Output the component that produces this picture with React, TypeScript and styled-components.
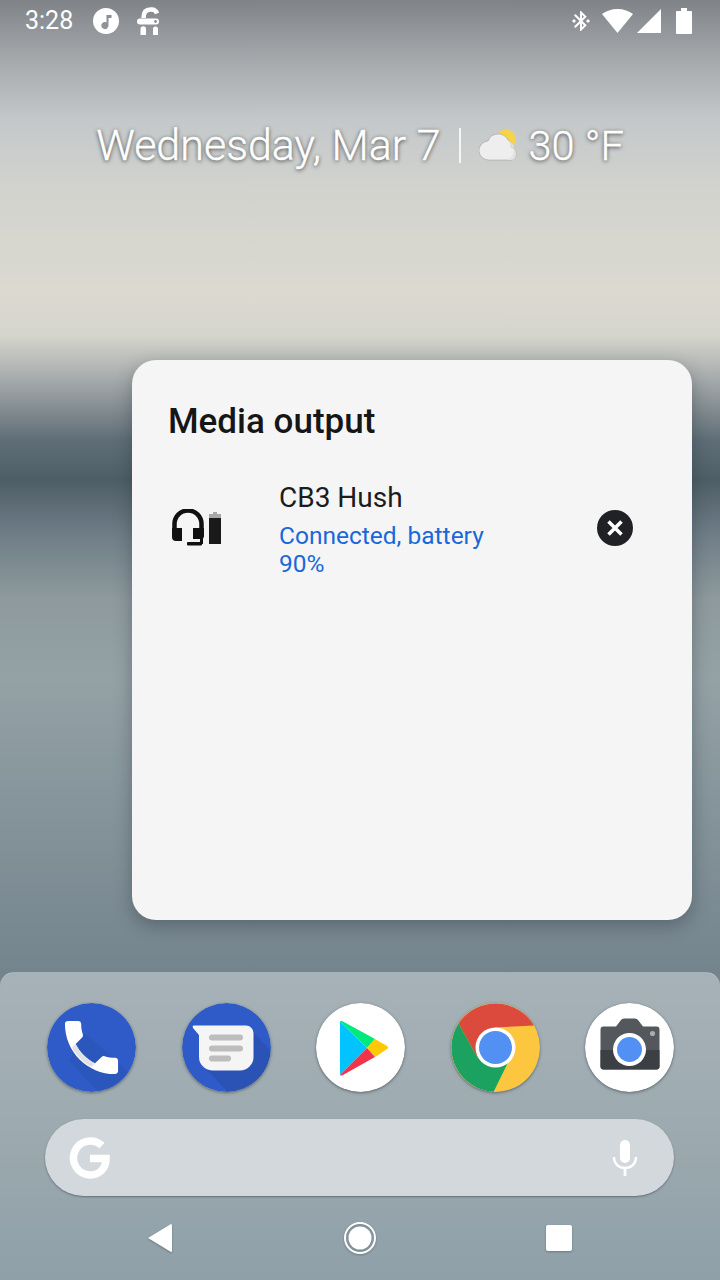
import React from "react";
import styled, { createGlobalStyle } from "styled-components";

const GlobalStyle = createGlobalStyle`
  html, body {
    margin: 0;
    padding: 0;
    width: 720px;
    height: 1280px;
    overflow: hidden;
    font-family: Roboto, "Liberation Sans", sans-serif;
  }
`;

const Screen = styled.div`
  width: 720px;
  height: 1280px;
  display: flex;
  flex-direction: column;
  background: linear-gradient(
    180deg,
    #7f8287 0px,
    #a6a9ac 60px,
    #c4c8ca 120px,
    #d2d3ce 190px,
    #dbd9d0 290px,
    #d6d5cd 335px,
    #9fa5a6 385px,
    #5f6e76 440px,
    #4e5e67 480px,
    #72808a 540px,
    #8e9a9d 600px,
    #94a2a6 680px,
    #86959b 800px,
    #76868f 960px,
    #6f7f88 1000px
  );
`;

const StatusBar = styled.div`
  height: 42px;
  display: flex;
  align-items: center;
  justify-content: space-between;
  padding: 0 28px 0 25px;
  flex-shrink: 0;
`;

const StatusGroup = styled.div`
  display: flex;
  align-items: center;
`;

const Clock = styled.span`
  font-size: 25px;
  color: #fff;
  line-height: 42px;
  width: 68px;
`;

const IconGap = styled.span<{ $left: number }>`
  display: flex;
  margin-left: ${(p) => p.$left}px;
`;

const Glance = styled.div`
  margin-top: 79px;
  height: 48px;
  display: flex;
  align-items: center;
  justify-content: center;
  flex-shrink: 0;
`;

const GlanceText = styled.span<{ $size: number }>`
  font-family: Roboto, sans-serif;
  font-weight: 300;
  font-size: ${(p) => p.$size}px;
  color: #fff;
  white-space: nowrap;
  -webkit-text-stroke: 0.4px #fff;
  text-shadow: 0 1px 4px rgba(0, 0, 0, 0.75);
`;

const GlanceDivider = styled.div`
  width: 2px;
  height: 35px;
  background: rgba(255, 255, 255, 0.8);
  margin: 0 18px;
`;

const CloudWrap = styled.div`
  display: flex;
  margin-right: 8px;
`;

const Card = styled.section`
  width: 560px;
  height: 560px;
  margin: 191px 28px 0 auto;
  flex-shrink: 0;
  box-sizing: border-box;
  padding: 42px 36px 0;
  background: #f5f5f5;
  border-radius: 24px;
  box-shadow: 0 6px 18px rgba(30, 40, 50, 0.35);
`;

const CardTitle = styled.h2`
  margin: 0;
  font-size: 35px;
  line-height: 40px;
  font-weight: 500;
  color: #161616;
`;

const DeviceRow = styled.div`
  display: flex;
  align-items: flex-start;
  margin-top: 38px;
`;

const DeviceIconSlot = styled.div`
  width: 112px;
  padding: 29px 0 0 4px;
  box-sizing: border-box;
  flex-shrink: 0;
  display: flex;
`;

const DeviceText = styled.div`
  width: 240px;
  flex-shrink: 0;
  margin-left: -1px;
`;

const DeviceName = styled.div`
  font-size: 28px;
  line-height: 36px;
  color: #1c1c1c;
`;

const DeviceStatus = styled.div`
  margin-top: 6px;
  font-size: 24.5px;
  line-height: 28px;
  color: #1a68d8;
`;

const CloseSlot = styled.div`
  margin: 30px 0 0 78px;
  display: flex;
`;

const Dock = styled.footer`
  margin-top: auto;
  height: 308px;
  flex-shrink: 0;
  box-sizing: border-box;
  padding-top: 30px;
  border-radius: 14px 14px 0 0;
  border-top: 1px solid rgba(255, 255, 255, 0.18);
  background: linear-gradient(180deg, #a6b2b7 0%, #9daaaf 50%, #8fa0a9 100%);
  display: flex;
  flex-direction: column;
`;

const AppRow = styled.div`
  width: 627px;
  margin-left: 47px;
  display: flex;
  justify-content: space-between;
`;

const AppIcon = styled.svg`
  width: 89px;
  height: 89px;
  display: block;
  border-radius: 50%;
  box-shadow: 0 1px 3px rgba(40, 50, 60, 0.55);
`;

const SearchBar = styled.div`
  width: 629px;
  height: 77px;
  margin: 27px 0 0 45px;
  box-sizing: border-box;
  padding: 0 36px 0 23px;
  border-radius: 39px;
  background: #d3d8dc;
  box-shadow: 0 1px 2px rgba(60, 75, 85, 0.6);
  display: flex;
  align-items: center;
  justify-content: space-between;
`;

const NavBar = styled.nav`
  width: 428px;
  margin: 24px 0 0 146px;
  display: flex;
  align-items: center;
  justify-content: space-between;
`;

const NavIcon = styled.svg<{ $width: number }>`
  display: block;
  width: ${(p) => p.$width}px;
  height: 36px;
  filter: drop-shadow(0 1px 1px rgba(50, 60, 70, 0.4));
`;

const Icon = styled.svg`
  display: block;
  flex-shrink: 0;
`;

const MusicIcon = () => (
  <Icon width="26" height="26" viewBox="0 0 26 26">
    <path
      fillRule="evenodd"
      fill="#fff"
      d="M13 0a13 13 0 1 0 0 26a13 13 0 0 0 0-26zM13.500 7h5v3h-3v7.500a3.600 3.600 0 1 1-2-3.200z"
    />
  </Icon>
);

const FiIcon = () => (
  <Icon width="24" height="28" viewBox="0 0 24 28">
    <path
      d="M7.500 11C7.500 5 10.500 2.500 14.500 2.500H15.500C18 2.500 20 3.500 21 6.500"
      fill="none"
      stroke="#fff"
      strokeWidth="4.500"
    />
    <rect x="1" y="11.500" width="22" height="6" rx="3" fill="#fff" />
    <circle cx="19.500" cy="14.500" r="1.400" fill="#8d9094" />
    <path d="M4.500 22a2.500 2.500 0 0 1 5.500 0V28H4.500zM17 22a2.500 2.500 0 0 1 5 0V28h-5z" fill="#fff" />
  </Icon>
);

const BluetoothIcon = () => (
  <Icon width="24" height="24" viewBox="0 0 24 24">
    <path
      fill="#fff"
      d="M7 12l-2-2-2 2 2 2 2-2zm10.710-4.290L12 2h-1v7.590L6.410 5 5 6.410 10.590 12 5 17.590 6.410 19 11 14.410V22h1l5.710-5.710-4.300-4.290 4.300-4.290zM13 5.830l1.880 1.880L13 9.590V5.830zm1.880 10.460L13 18.170v-3.760l1.880 1.880zM19 10l-2 2 2 2 2-2-2-2z"
    />
  </Icon>
);

const WifiIcon = () => (
  <Icon width="31" height="24" viewBox="0 0 31 24">
    <path fill="#fff" d="M15.500 24L0 5C4 2 9.500 0 15.500 0S27 2 31 5z" />
  </Icon>
);

const SignalIcon = () => (
  <Icon width="24" height="24" viewBox="0 0 24 24">
    <path fill="#fff" d="M0 24L24 0v24z" />
  </Icon>
);

const BatteryIcon = () => (
  <Icon width="16" height="26" viewBox="0 0 16 26">
    <path fill="#fff" d="M5 0h6v3h4a1 1 0 0 1 1 1v21a1 1 0 0 1-1 1H1a1 1 0 0 1-1-1V4a1 1 0 0 1 1-1h4z" />
  </Icon>
);

const CloudIcon = () => (
  <Icon width="42" height="34" viewBox="0 0 42 34">
    <circle cx="27" cy="11" r="9.500" fill="#f7d447" />
    <path
      d="M10 32a9.500 9.500 0 0 1-1-19 11 11 0 0 1 20-1 6 6 0 0 1 3 7 7 7 0 0 1 1 13z"
      fill="#eeeeee"
      stroke="rgba(120,120,120,0.35)"
      strokeWidth="1"
    />
    <path d="M29 12a11 11 0 0 1-1 20h5a7 7 0 0 0-1-13 6 6 0 0 0-3-7z" fill="#e2e2e2" />
  </Icon>
);

const HeadsetBattery = () => (
  <Icon width="50" height="38" viewBox="0 0 50 38">
    <path d="M2.500 22V15a13.500 13.500 0 0 1 27 0v7" fill="none" stroke="#111" strokeWidth="4.500" />
    <path d="M0 19h10v13H4a4 4 0 0 1-4-4zM21 19h11v8a3 3 0 0 1-3 3h-8z" fill="#111" />
    <rect x="15" y="33" width="15" height="3.500" rx="1" fill="#111" />
    <rect x="28" y="29" width="3" height="6" fill="#111" />
    <path d="M41 3h4v2h4v4H37V5h4z" fill="#a8a8a8" />
    <rect x="37" y="9" width="12" height="26" fill="#1a1a1a" />
  </Icon>
);

const CloseIcon = () => (
  <Icon width="36" height="36" viewBox="0 0 36 36">
    <circle cx="18" cy="18" r="18" fill="#202124" />
    <path d="M11.500 11.500l13 13M24.500 11.500l-13 13" stroke="#fff" strokeWidth="3.600" />
  </Icon>
);

const PhoneApp = () => (
  <AppIcon viewBox="0 0 89 89">
    <defs>
      <clipPath id="phoneClip">
        <circle cx="44.500" cy="44.500" r="44.500" />
      </clipPath>
    </defs>
    <circle cx="44.500" cy="44.500" r="44.500" fill="#2f5bc8" />
    <path d="M38 30L89 76V89H52L22 58z" fill="#2850ad" opacity="0.45" clipPath="url(#phoneClip)" />
    <g transform="translate(44.500 44.500) scale(2.950) translate(-12 -12)">
      <path
        fill="#fff"
        d="M6.620 10.790c1.440 2.830 3.760 5.140 6.590 6.590l2.200-2.200c.27-.27.67-.36 1.020-.24 1.120.37 2.330.57 3.570.57.55 0 1 .45 1 1V20c0 .55-.45 1-1 1-9.390 0-17-7.610-17-17 0-.55.45-1 1-1h3.500c.55 0 1 .45 1 1 0 1.250.2 2.450.57 3.570.11.35.03.74-.25 1.020l-2.200 2.200z"
      />
    </g>
    <path d="M28.600 41C32.800 49.500 39.600 56.200 48 60.400L44.500 64C36 59.500 29 52.500 25 44.500z" fill="#e2e2e2" />
  </AppIcon>
);

const MessagesApp = () => (
  <AppIcon viewBox="0 0 89 89">
    <defs>
      <clipPath id="messagesClip">
        <circle cx="44.500" cy="44.500" r="44.500" />
      </clipPath>
    </defs>
    <circle cx="44.500" cy="44.500" r="44.500" fill="#2f5bc8" />
    <path d="M70 28L89 48V89H46L22 64z" fill="#2850ad" opacity="0.7" clipPath="url(#messagesClip)" />
    <path
      d="M12 22.500H64a7.500 7.500 0 0 1 7.500 7.500V54a13.500 13.500 0 0 1-13.500 13.500H30A13.500 13.500 0 0 1 17 54V32L11 25q-1-2.500 1-2.500z"
      fill="#f5f5f5"
    />
    <rect x="27" y="31.500" width="34" height="6" rx="3" fill="#bdbdbd" />
    <rect x="27" y="42.500" width="34" height="6" rx="3" fill="#bdbdbd" />
    <rect x="27" y="52.500" width="22" height="6" rx="3" fill="#bdbdbd" />
  </AppIcon>
);

const PlayApp = () => (
  <AppIcon viewBox="0 0 89 89">
    <circle cx="44.500" cy="44.500" r="44.500" fill="#fff" />
    <path d="M24 18.500L51 45L24 72z" fill="#00c3ff" />
    <path d="M24 18.500q1-1.500 3 0L59 36L51 45z" fill="#00e97c" />
    <path d="M59 36L71 43q2 1.500 0 3L59 54L51 45z" fill="#ffc900" />
    <path d="M51 45L59 54L27 72q-2 1-3 0z" fill="#f0354a" />
  </AppIcon>
);

const ChromeApp = () => (
  <AppIcon viewBox="0 0 89 89">
    <g transform="translate(44.500 44.500)">
      <circle r="44.500" fill="#fcc63f" />
      <path d="M-37 -24A44.500 44.500 0 0 1 38.500 -22L0 -20L-18 10Z" fill="#db4a3c" />
      <path d="M-37 -24L-18 10L12 16L-2 44.500A44.500 44.500 0 0 1 -37 -24Z" fill="#1ba260" />
      <circle r="20" fill="#fff" />
      <circle r="16.500" fill="#5390f4" />
    </g>
  </AppIcon>
);

const CameraApp = () => (
  <AppIcon viewBox="0 0 89 89">
    <circle cx="44.500" cy="44.500" r="44.500" fill="#fff" />
    <path
      d="M18.500 23.500H31L36 17Q37 15.500 39 15.500H50Q52 15.500 53 17L58 23.500H71.500a3 3 0 0 1 3 3V63.500a3 3 0 0 1-3 3H18.500a3 3 0 0 1-3-3V26.500a3 3 0 0 1 3-3z"
      fill="#54575c"
    />
    <path d="M15.500 47H74.500V63.500a3 3 0 0 1-3 3H18.500a3 3 0 0 1-3-3z" fill="#3c3f43" />
    <circle cx="44.500" cy="46.500" r="16.500" fill="#fff" />
    <circle cx="44.500" cy="46.500" r="12.500" fill="#5390f4" />
    <circle cx="67.500" cy="30.500" r="2.600" fill="#a9abad" />
  </AppIcon>
);

const GoogleMark = () => (
  <Icon width="44" height="44" viewBox="0 0 44 44">
    <path
      d="M34 9.500A17 17 0 1 0 22 39c9.500 0 16-6.500 16-16.500H22"
      fill="none"
      stroke="#fff"
      strokeWidth="7.500"
    />
  </Icon>
);

const MicIcon = () => (
  <Icon width="26" height="36" viewBox="0 0 26 36">
    <rect x="8" y="0" width="10" height="23" rx="5" fill="#fff" />
    <path d="M2 17c0 7 5 11 11 11s11-4 11-11" fill="none" stroke="#fff" strokeWidth="2.400" />
    <rect x="11.600" y="27" width="2.800" height="9" fill="#fff" />
  </Icon>
);

export default function App() {
  return (
    <>
      <GlobalStyle />
      <Screen>
        <StatusBar>
          <StatusGroup>
            <Clock>3:28</Clock>
            <MusicIcon />
            <IconGap $left={17}>
              <FiIcon />
            </IconGap>
          </StatusGroup>
          <StatusGroup>
            <BluetoothIcon />
            <IconGap $left={9}>
              <WifiIcon />
            </IconGap>
            <IconGap $left={4}>
              <SignalIcon />
            </IconGap>
            <IconGap $left={15}>
              <BatteryIcon />
            </IconGap>
          </StatusGroup>
        </StatusBar>

        <Glance>
          <GlanceText $size={43}>Wednesday, Mar 7</GlanceText>
          <GlanceDivider />
          <CloudWrap>
            <CloudIcon />
          </CloudWrap>
          <GlanceText $size={41.5}>30 °F</GlanceText>
        </Glance>

        <Card>
          <CardTitle>Media output</CardTitle>
          <DeviceRow>
            <DeviceIconSlot>
              <HeadsetBattery />
            </DeviceIconSlot>
            <DeviceText>
              <DeviceName>CB3 Hush</DeviceName>
              <DeviceStatus>Connected, battery 90%</DeviceStatus>
            </DeviceText>
            <CloseSlot>
              <CloseIcon />
            </CloseSlot>
          </DeviceRow>
        </Card>

        <Dock>
          <AppRow>
            <PhoneApp />
            <MessagesApp />
            <PlayApp />
            <ChromeApp />
            <CameraApp />
          </AppRow>
          <SearchBar>
            <GoogleMark />
            <MicIcon />
          </SearchBar>
          <NavBar>
            <NavIcon $width={28} viewBox="0 0 28 36">
              <path d="M2 18L25 4q1 0 1 1.500V30.500q0 1.500-1 1.500z" fill="#fff" />
            </NavIcon>
            <NavIcon $width={32} viewBox="0 0 32 36">
              <circle cx="16" cy="18" r="15" fill="none" stroke="#fff" strokeWidth="2" />
              <circle cx="16" cy="18" r="11.500" fill="#fff" />
            </NavIcon>
            <NavIcon $width={28} viewBox="0 0 28 36">
              <rect x="0" y="5" width="26" height="26" rx="2" fill="#fff" />
            </NavIcon>
          </NavBar>
        </Dock>
      </Screen>
    </>
  );
}
